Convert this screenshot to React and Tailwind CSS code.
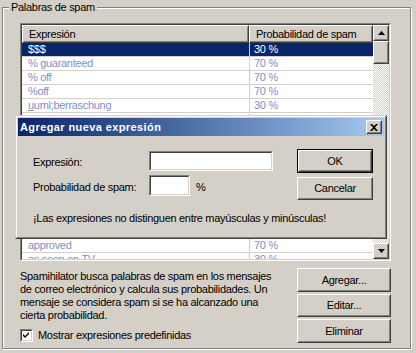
import React from "react";

const rows = [
  ["$$$", "30 %"],
  ["% guaranteed", "70 %"],
  ["% off", "70 %"],
  ["%off", "70 %"],
  [<><u>u</u>uml;berraschung</>, "30 %"],
  ["", ""],
  ["", ""],
  ["", ""],
  ["", ""],
  ["", ""],
  ["", ""],
  ["", ""],
  ["", ""],
  ["", ""],
  ["approved", "70 %"],
  ["as seen on TV", "30 %"],
];

function Raised({ className = "", children }) {
  return (
    <div className={"border border-t-white border-l-white border-r-[#404040] border-b-[#404040] bg-[#d4d0c8] " + className}>
      <div className="w-full h-full border border-t-[#d4d0c8] border-l-[#d4d0c8] border-r-[#808080] border-b-[#808080] flex items-center justify-center">
        {children}
      </div>
    </div>
  );
}

function Sunken({ className = "", children }) {
  return (
    <div className={"border border-t-[#808080] border-l-[#808080] border-r-white border-b-white " + className}>
      <div className="w-full h-full border border-t-[#404040] border-l-[#404040] border-r-[#d4d0c8] border-b-[#d4d0c8] bg-white">
        {children}
      </div>
    </div>
  );
}

function Button({ label, def = false, className = "" }) {
  if (def) {
    return (
      <div className={"border border-black " + className}>
        <Raised className="w-full h-full">
          <span>{label}</span>
        </Raised>
      </div>
    );
  }
  return (
    <Raised className={className}>
      <span>{label}</span>
    </Raised>
  );
}

function Tri({ up }) {
  return (
    <svg width="7" height="4" viewBox="0 0 7 4">
      {up ? <path d="M3.5 0 L7 4 L0 4 Z" fill="#000" /> : <path d="M0 0 L7 0 L3.5 4 Z" fill="#000" />}
    </svg>
  );
}

export default function App() {
  return (
    <div className="relative w-[416px] h-[353px] bg-[#d4d0c8] overflow-hidden text-[11px] leading-[13px] tracking-[-0.3px] text-black [font-family:Tahoma,'Liberation_Sans',Arial,sans-serif]">
      {/* group box */}
      <div className="relative ml-[2px] mt-[7px] w-[409px] h-[342px] border border-[#808080] shadow-[inset_1px_1px_0_#fff,1px_1px_0_#fff]">
        <div className="absolute left-[6px] top-[-7px] bg-[#d4d0c8] px-[2px] leading-[13px]">Palabras de spam</div>

        <div className="pl-[17px] pt-[15px]">
          {/* list view */}
          <Sunken className="w-[371px] h-[238px]">
            <div className="flex h-full">
              <div className="w-[351px] h-full overflow-hidden">
                <div className="flex h-[18px]">
                  <Raised className="w-[227px] h-[18px]">
                    <span className="w-full pl-[5px]">Expresión</span>
                  </Raised>
                  <Raised className="w-[124px] h-[18px]">
                    <span className="w-full pl-[5px]">Probabilidad de spam</span>
                  </Raised>
                </div>
                {rows.map(([a, b], i) => (
                  <div
                    key={i}
                    className={
                      "flex h-[14px] border-b border-[#d4d0c8] " +
                      (i === 0 ? "bg-[#0a246a] text-white" : "text-[#7f8fc7]")
                    }
                  >
                    <div className="w-[227px] pl-[6px] leading-[13px] whitespace-nowrap">{a}</div>
                    <div className="w-[124px] border-l border-[#d4d0c8] pl-[4px] leading-[13px]">{b}</div>
                  </div>
                ))}
              </div>
              {/* scrollbar */}
              <div className="w-[16px] h-full flex flex-col">
                <Raised className="w-[16px] h-[16px]">
                  <Tri up />
                </Raised>
                <Raised className="w-[16px] h-[23px]" />
                <div className="flex-1 bg-[repeating-conic-gradient(#ffffff_0%_25%,#d4d0c8_0%_50%)] bg-[length:2px_2px]" />
                <Raised className="w-[16px] h-[16px]">
                  <Tri />
                </Raised>
              </div>
            </div>
          </Sunken>

          {/* bottom area */}
          <div className="flex mt-[7px]">
            <div className="flex flex-col w-[277px]">
              <div className="mt-[2px] leading-[13px]">
                Spamihilator busca palabras de spam en los mensajes
                <br />
                de correo electrónico y calcula sus probabilidades. Un
                <br />
                mensaje se considera spam si se ha alcanzado una
                <br />
                cierta probabilidad.
              </div>
              <div className="flex items-center mt-[7px]">
                <Sunken className="w-[13px] h-[13px]">
                  <svg width="9" height="9" viewBox="0 0 9 9" className="block">
                    <path d="M1 3 L3 5 L7 1 L7 3 L3 7 L1 5 Z" fill="#000" />
                  </svg>
                </Sunken>
                <span className="ml-[5px]">Mostrar expresiones predefinidas</span>
              </div>
            </div>
            <div className="flex flex-col gap-[2px]">
              <Button label="Agregar..." className="w-[94px] h-[24px]" />
              <Button label="Editar..." className="w-[94px] h-[23px]" />
              <Button label="Eliminar" className="w-[94px] h-[24px]" />
            </div>
          </div>
        </div>
      </div>

      {/* dialog */}
      <div className="absolute left-[15px] top-[115px] w-[372px] h-[124px] border border-t-[#d4d0c8] border-l-[#d4d0c8] border-r-[#404040] border-b-[#404040]">
        <div className="w-full h-full border border-t-white border-l-white border-r-[#808080] border-b-[#808080] bg-[#d4d0c8] p-[1px] flex flex-col">
          <div className="h-[18px] flex items-center justify-between bg-gradient-to-r from-[#0a246a] to-[#a6caf0] pl-[2px] pr-[2px]">
            <span className="text-white font-bold tracking-[0.4px]">Agregar nueva expresión</span>
            <Raised className="w-[16px] h-[14px]">
              <svg width="8" height="7" viewBox="0 0 8 7" className="block">
                <path d="M0 0 H2 L4 2 L6 0 H8 L5 3.5 L8 7 H6 L4 5 L2 7 H0 L3 3.5 Z" fill="#000" />
              </svg>
            </Raised>
          </div>
          <div className="pl-[15px] pr-[11px] pt-[13px] flex flex-col">
            <div className="flex justify-between">
              <div className="flex flex-col mt-[2px]">
                <div className="flex items-center">
                  <span className="w-[116px] pt-[3px]">Expresión:</span>
                  <Sunken className="w-[124px] h-[20px]" />
                </div>
                <div className="flex items-center mt-[4px]">
                  <span className="w-[116px] pt-[3px]">Probabilidad de spam:</span>
                  <Sunken className="w-[41px] h-[21px]" />
                  <span className="ml-[6px] pt-[3px]">%</span>
                </div>
              </div>
              <div className="flex flex-col gap-[4px]">
                <Button label="OK" def className="w-[76px] h-[24px]" />
                <Button label="Cancelar" className="w-[76px] h-[23px]" />
              </div>
            </div>
            <div className="mt-[12px]">¡Las expresiones no distinguen entre mayúsculas y minúsculas!</div>
          </div>
        </div>
      </div>
    </div>
  );
}
